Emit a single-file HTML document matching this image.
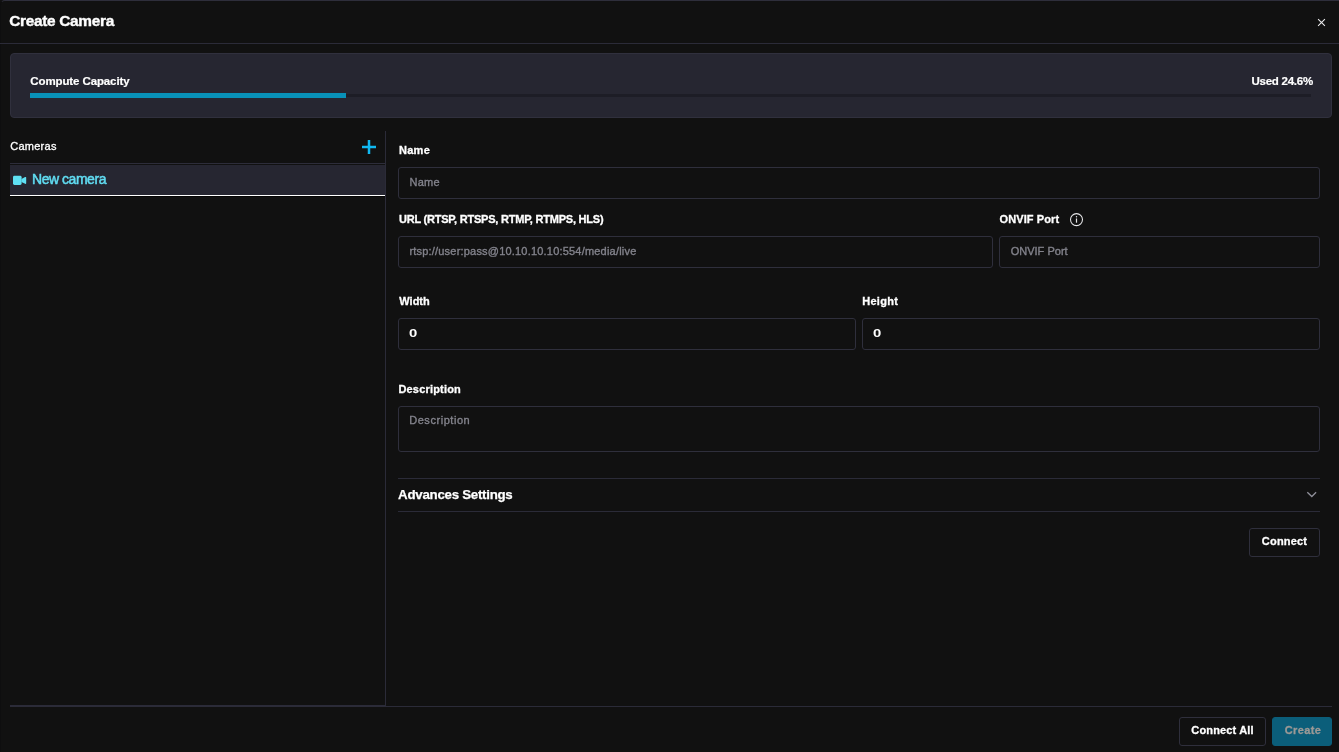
<!DOCTYPE html>
<html>
<head>
<meta charset="utf-8">
<title>Create Camera</title>
<style>
*{box-sizing:border-box;margin:0;padding:0}
html,body{width:1339px;height:752px;overflow:hidden;background:#111111;}
body{font-family:"Liberation Sans",sans-serif;color:#fff;position:relative;}
.abs{position:absolute;white-space:nowrap}
.modal{position:absolute;left:0;top:0;width:1345px;height:760px;border-top:1px solid #2e2e3b;border-left:1px solid #0e0e0f;border-radius:5px 0 0 0;background:#111111}
#layer{position:absolute;left:0;top:0;width:1339px;height:752px;will-change:transform}
.title{left:9.2px;top:11px;font-size:15.4px;font-weight:700;line-height:19px;letter-spacing:-0.3px;-webkit-text-stroke:0.4px #fff}
.hline{left:0;top:43px;width:1339px;height:1px;background:#2b2b38}
.cap{left:10px;top:53px;width:1322px;height:65px;background:#262631;border:1px solid #30303d;border-radius:4px}
.caplabel{left:30.3px;top:74px;font-size:11.5px;font-weight:700;line-height:14px;letter-spacing:-0.11px;-webkit-text-stroke:0.2px #fff}
.capused{right:26.1px;top:74px;font-size:11.5px;font-weight:700;line-height:14px;letter-spacing:-0.25px;-webkit-text-stroke:0.2px #fff}
.track{left:30px;top:94px;width:1281px;height:3px;background:#1d1d26}
.fill{left:30px;top:93px;width:316px;height:5px;background:#0891b8}
.camlabel{left:10.2px;top:139px;font-size:11px;line-height:14px;color:#fff;letter-spacing:0.27px;-webkit-text-stroke:0.3px #fff}
.row{left:10px;top:165px;width:375px;height:30px;background:#262631}
.rowtop{left:10px;top:163px;width:375px;height:1px;background:#2d2d3a}
.rowline{left:10px;top:195px;width:375px;height:1px;background:#fff}
.rowline2{left:10px;top:196px;width:375px;height:1px;background:#070707}
.rowtext{left:32px;top:171px;font-size:14px;line-height:17px;color:#60dcf2;letter-spacing:-0.46px;-webkit-text-stroke:0.5px #60dcf2}
.vline{left:385px;top:131px;width:1px;height:576px;background:#2b2b38}
.lbl{font-size:11px;font-weight:700;line-height:14px;color:#fff;-webkit-text-stroke:0.3px #fff}
.inp{height:32px;border:1px solid #2f2f3c;border-radius:3px;background:#111111;font-size:11px;line-height:28px;padding-left:10px;color:#83838c;-webkit-text-stroke:0.35px #83838c}
.inp.val{color:#fff;font-weight:700;-webkit-text-stroke:0}
.inp.val span{display:inline-block;transform:scaleX(1.35);transform-origin:0 50%}
.btn{border:1px solid #2f2f3c;border-radius:3px;font-size:11px;font-weight:700;text-align:center;color:#fff;-webkit-text-stroke:0.3px #fff}
</style>
</head>
<body>
<div class="modal"></div>
<div id="layer">
<div class="abs title"><span id="t1">Create Camera</span></div>
<svg class="abs" style="left:1316px;top:17px" width="11" height="11" viewBox="0 0 11 11"><path d="M2.1 2.1 L8.9 8.9 M8.9 2.1 L2.1 8.9" stroke="#ededef" stroke-width="1.05" fill="none"/></svg>
<div class="abs hline"></div>

<div class="abs cap"></div>
<div class="abs caplabel"><span id="t2">Compute Capacity</span></div>
<div class="abs capused"><span id="t3">Used 24.6%</span></div>
<div class="abs track"></div>
<div class="abs fill"></div>

<div class="abs camlabel"><span id="t4">Cameras</span></div>
<svg class="abs" style="left:362px;top:140px" width="14" height="14" viewBox="0 0 14 14"><path d="M7 0 V14 M0 7 H14" stroke="#10b8f1" stroke-width="2.5" fill="none"/></svg>
<div class="abs rowtop"></div><div class="abs row"></div>
<div class="abs rowline"></div><div class="abs rowline2"></div>
<svg class="abs" style="left:13px;top:175px" width="14" height="11" viewBox="0 0 14 11"><rect x="0" y="0.8" width="8.6" height="9.1" rx="1.4" fill="#5fe0f4"/><path d="M8.4 4 L12.1 2.1 Q13.2 1.6 13.2 2.7 V8.2 Q13.2 9.3 12.1 8.8 L8.4 6.9 Z" fill="#5fe0f4"/></svg>
<div class="abs rowtext"><span id="t5">New camera</span></div>
<div class="abs vline"></div>

<!-- form -->
<div class="abs lbl" style="left:398.9px;top:143px;letter-spacing:0.3px"><span id="t6">Name</span></div>
<div class="abs inp" style="left:398px;top:167px;width:922px;letter-spacing:0.25px;padding-left:10.5px"><span id="t7">Name</span></div>

<div class="abs lbl" style="left:399px;top:212px;letter-spacing:-0.22px"><span id="t8">URL (RTSP, RTSPS, RTMP, RTMPS, HLS)</span></div>
<div class="abs inp" style="left:398px;top:236px;width:595px;letter-spacing:0.2px;padding-left:10.4px"><span id="t9">rtsp://user:pass@10.10.10.10:554/media/live</span></div>
<div class="abs lbl" style="left:999.6px;top:212px;letter-spacing:0.09px"><span id="t10">ONVIF Port</span></div>
<svg class="abs" style="left:1069px;top:212px" width="15" height="15" viewBox="0 0 15 15"><circle cx="7.5" cy="7.6" r="6" stroke="#e8e8ea" stroke-width="1.05" fill="none"/><path d="M7.5 6.5 V10.7" stroke="#e8e8ea" stroke-width="1.2"/><circle cx="7.5" cy="4.8" r="0.7" fill="#e8e8ea"/></svg>
<div class="abs inp" style="left:999px;top:236px;width:321px;letter-spacing:0.01px;padding-left:10.7px"><span id="t11">ONVIF Port</span></div>

<div class="abs lbl" style="left:399.3px;top:294px;letter-spacing:0px"><span id="t12">Width</span></div>
<div class="abs inp val" style="left:398px;top:318px;width:458px"><span id="t20">0</span></div>
<div class="abs lbl" style="left:862.2px;top:294px;letter-spacing:0.29px"><span id="t13">Height</span></div>
<div class="abs inp val" style="left:862px;top:318px;width:458px"><span>0</span></div>

<div class="abs lbl" style="left:398.4px;top:382px;letter-spacing:0.19px"><span id="t14">Description</span></div>
<div class="abs inp" style="left:398px;top:406px;width:922px;height:46px;line-height:14px;padding-top:6px;letter-spacing:0.55px;padding-left:10.2px"><span id="t15">Description</span></div>

<div class="abs" style="left:398px;top:478px;width:922px;height:1px;background:#2b2b38"></div>
<div class="abs" style="left:398.1px;top:487px;font-size:13.3px;font-weight:700;line-height:16px;letter-spacing:-0.27px;-webkit-text-stroke:0.25px #fff"><span id="t16">Advances Settings</span></div>
<svg class="abs" style="left:1306px;top:490px" width="12" height="9" viewBox="0 0 12 9"><path d="M1.3 2.2 L5.8 6.5 L10.1 2.2" stroke="#90909a" stroke-width="1.3" fill="none"/></svg>
<div class="abs" style="left:398px;top:511px;width:922px;height:1px;background:#2b2b38"></div>

<div class="abs btn" style="left:1249px;top:528px;width:71px;height:29px;line-height:25px;letter-spacing:0.18px"><span id="t17">Connect</span></div>

<!-- footer -->
<div class="abs" style="left:10px;top:705px;width:376px;height:2px;background:#2b2b38"></div>
<div class="abs" style="left:385px;top:706px;width:947px;height:1px;background:#2b2b38"></div>
<div class="abs btn" style="left:1179px;top:717px;width:87px;height:29px;line-height:24px;letter-spacing:0.15px"><span id="t18">Connect All</span></div>
<div class="abs btn" style="left:1272px;top:717px;width:60px;height:29px;line-height:24px;padding-left:2px;background:#0b5e7a;border-color:#0b5e7a;color:#9b9996;-webkit-text-stroke:0.3px #9b9996;letter-spacing:0.35px"><span id="t19">Create</span></div>
</div>
</body>
</html>
